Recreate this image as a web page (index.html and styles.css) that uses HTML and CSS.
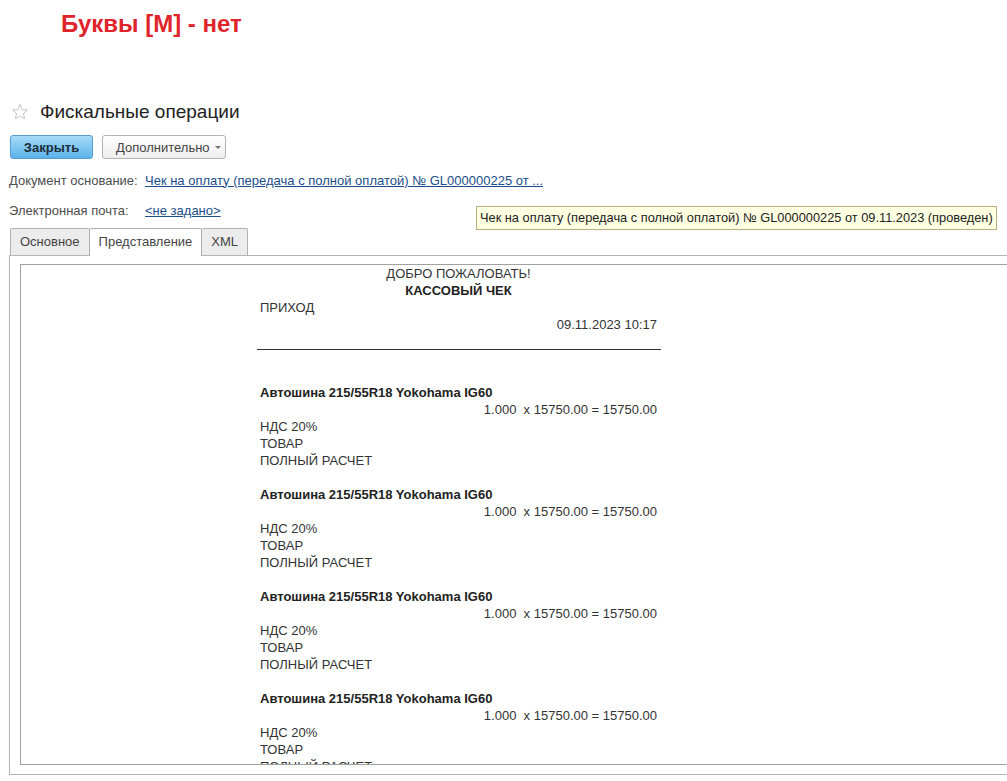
FILE: index.html
```html
<!DOCTYPE html>
<html lang="ru">
<head>
    <meta charset="UTF-8">
    <title>Фискальные операции</title>
    <link rel="stylesheet" href="styles.css">
</head>
<body>
    <h2 class="banner">Буквы [М] - нет</h2>

    <div class="title-row">
        <svg class="star" width="18" height="18" viewBox="0 0 18 18">
            <path d="M9 1.5 L11.1 6.6 L16.5 7 L12.4 10.5 L13.7 15.9 L9 13 L4.3 15.9 L5.6 10.5 L1.5 7 L6.9 6.6 Z" fill="none" stroke="#c4c4c4" stroke-width="1"/>
        </svg>
        <span class="title">Фискальные операции</span>
    </div>

    <div class="toolbar">
        <button class="btn btn-primary">Закрыть</button>
        <button class="btn btn-more">Дополнительно <span class="caret"></span></button>
    </div>

    <div class="field">
        <span class="label">Документ основание:</span>
        <a class="link" href="#">Чек на оплату (передача с полной оплатой) № GL000000225 от ...</a>
    </div>
    <div class="field field-mail">
        <span class="label">Электронная почта:</span>
        <a class="link" href="#">&lt;не задано&gt;</a>
    </div>

    <div class="tooltip">Чек на оплату (передача с полной оплатой) № GL000000225 от 09.11.2023 (проведен)</div>

    <div class="tabs">
        <div class="tab">Основное</div>
        <div class="tab active">Представление</div>
        <div class="tab">XML</div>
    </div>

    <div class="panel">
        <div class="frame">
            <div class="receipt">
                <div class="row center">ДОБРО ПОЖАЛОВАТЬ!</div>
                <div class="row center bold">КАССОВЫЙ ЧЕК</div>
                <div class="row">ПРИХОД</div>
                <div class="row right">09.11.2023 10:17</div>
                <div class="row rule"></div>
                <div class="row"></div>
                <div class="row"></div>

                <div class="row bold">Автошина 215/55R18 Yokohama IG60</div>
                <div class="row right">1.000&nbsp;&nbsp;x 15750.00 = 15750.00</div>
                <div class="row">НДС 20%</div>
                <div class="row">ТОВАР</div>
                <div class="row">ПОЛНЫЙ РАСЧЕТ</div>
                <div class="row"></div>

                <div class="row bold">Автошина 215/55R18 Yokohama IG60</div>
                <div class="row right">1.000&nbsp;&nbsp;x 15750.00 = 15750.00</div>
                <div class="row">НДС 20%</div>
                <div class="row">ТОВАР</div>
                <div class="row">ПОЛНЫЙ РАСЧЕТ</div>
                <div class="row"></div>

                <div class="row bold">Автошина 215/55R18 Yokohama IG60</div>
                <div class="row right">1.000&nbsp;&nbsp;x 15750.00 = 15750.00</div>
                <div class="row">НДС 20%</div>
                <div class="row">ТОВАР</div>
                <div class="row">ПОЛНЫЙ РАСЧЕТ</div>
                <div class="row"></div>

                <div class="row bold">Автошина 215/55R18 Yokohama IG60</div>
                <div class="row right">1.000&nbsp;&nbsp;x 15750.00 = 15750.00</div>
                <div class="row">НДС 20%</div>
                <div class="row">ТОВАР</div>
                <div class="row">ПОЛНЫЙ РАСЧЕТ</div>
                <div class="row"></div>
            </div>
        </div>
    </div>
</body>
</html>
```

FILE: styles.css
```css
body {
    margin: 0;
    font-family: 'Liberation Sans', Arial, sans-serif;
    font-size: 13px;
    color: #4a4a4a;
    background-color: #ffffff;
    overflow: hidden;
    position: relative;
    width: 1007px;
    height: 781px;
}

.banner {
    margin: 0;
    height: 90px;
    padding: 10px 0 0 61px;
    font-size: 24px;
    line-height: 28px;
    font-weight: bold;
    color: #e0242b;
}

.title-row {
    display: flex;
    align-items: center;
    height: 24px;
    padding-left: 11px;
}

.star {
    margin-right: 11px;
}

.title {
    font-size: 19px;
    color: #222;
}

.toolbar {
    display: flex;
    gap: 9px;
    margin-top: 11px;
    padding-left: 10px;
}

.btn {
    height: 24px;
    padding: 0 12px;
    border-radius: 3px;
    font-family: inherit;
    font-size: 13px;
    cursor: pointer;
}

.btn-primary {
    width: 83px;
    border: 1px solid #5a9bcf;
    background: linear-gradient(#a6daf8, #5bb3ea);
    color: #1e2c3a;
    font-weight: bold;
}

.btn-more {
    width: 124px;
    border: 1px solid #b4b4b4;
    background: linear-gradient(#ffffff, #eeeeee);
    color: #444;
    display: flex;
    align-items: center;
    gap: 5px;
    padding: 0 0 0 13px;
}

.caret {
    display: inline-block;
    width: 0;
    height: 0;
    border-left: 3px solid transparent;
    border-right: 3px solid transparent;
    border-top: 3px solid #777;
    margin-top: 1px;
}

.field {
    display: flex;
    align-items: center;
    height: 20px;
    margin-top: 11px;
    padding-left: 9px;
}

.field-mail {
    margin-top: 10px;
}

.label {
    width: 136px;
    color: #4d4d4d;
}

.link {
    color: #1b4e8a;
    text-decoration: underline;
}

.tooltip {
    position: absolute;
    left: 476px;
    top: 206px;
    width: 513px;
    height: 22px;
    line-height: 22px;
    padding: 0 3px;
    background-color: #ffffe1;
    border: 1px solid #b9ae82;
    color: #222;
    font-size: 12.8px;
    white-space: nowrap;
}

.tabs {
    display: flex;
    margin-top: 8px;
    padding-left: 10px;
    position: relative;
    z-index: 1;
}

.tab {
    height: 26px;
    line-height: 26px;
    padding: 0 9px;
    border: 1px solid #b0b0b0;
    border-bottom: none;
    border-left: none;
    background-color: #ececec;
    color: #444;
    border-radius: 2px 2px 0 0;
}

.tab:first-child {
    border-left: 1px solid #b0b0b0;
}

.tab.active {
    background-color: #ffffff;
    height: 27px;
    margin-bottom: -1px;
}

.panel {
    width: 1100px;
    margin-left: 9px;
    border: 1px solid #b4b4b4;
    padding: 8px 10px 9px 10px;
}

.frame {
    height: 499px;
    border: 1px solid #a0a0a0;
    overflow: hidden;
}

.receipt {
    width: 404px;
    margin-left: 236px;
    color: #333;
}

.row {
    height: 17px;
    line-height: 17px;
    padding: 0 4px 0 3px;
    white-space: nowrap;
}

.center {
    text-align: center;
}

.right {
    text-align: right;
}

.bold {
    font-weight: bold;
    color: #222;
}

.rule {
    height: 16px;
    padding: 0;
    border-bottom: 1px solid #333;
}
```
